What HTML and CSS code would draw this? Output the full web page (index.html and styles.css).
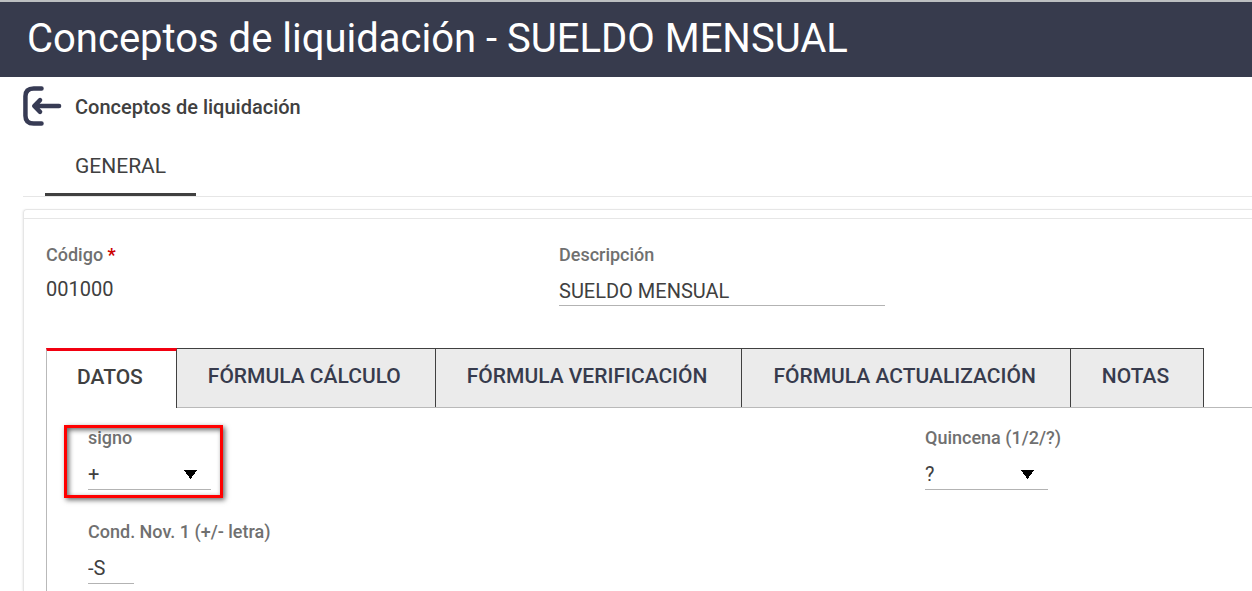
FILE: index.html
```html
<!DOCTYPE html>
<html lang="es">
<head>
<meta charset="utf-8">
<meta name="viewport" content="width=device-width, initial-scale=1">
<title>Conceptos de liquidación - SUELDO MENSUAL</title>
<link rel="stylesheet" href="styles.css">
</head>
<body>
<header class="title-bar">
  <h1 class="title">Conceptos de liquidación - SUELDO MENSUAL</h1>
</header>
<main class="page">
  <a class="back" href="#conceptos">
    <svg class="back-icon" viewBox="0 0 40 42" aria-hidden="true">
      <path d="M19 3H11Q2.500 3 2.500 11V31Q2.500 39 11 39H19M37 21H13M17.500 15L11.500 21L17.500 27" fill="none" stroke="currentColor" stroke-width="4.600" stroke-linecap="round" stroke-linejoin="round"/>
    </svg>
    <span class="back-text">Conceptos de liquidación</span>
  </a>
  <nav class="sections">
    <button class="section-tab" type="button">GENERAL</button>
  </nav>
  <section class="card">
    <div class="summary">
      <div class="field">
        <span class="label">Código <span class="required">*</span></span>
        <output class="value">001000</output>
      </div>
      <div class="field">
        <label class="label" for="descripcion">Descripción</label>
        <input class="control wide" id="descripcion" type="text" value="SUELDO MENSUAL">
      </div>
    </div>
    <div class="tabs" role="tablist">
      <button class="tab active" type="button" role="tab" aria-selected="true">DATOS</button>
      <button class="tab" type="button" role="tab">FÓRMULA CÁLCULO</button>
      <button class="tab" type="button" role="tab">FÓRMULA VERIFICACIÓN</button>
      <button class="tab" type="button" role="tab">FÓRMULA ACTUALIZACIÓN</button>
      <button class="tab" type="button" role="tab">NOTAS</button>
    </div>
    <div class="panel" role="tabpanel">
      <div class="field marked">
        <label class="label" for="signo">signo</label>
        <select class="control choice" id="signo"><option>+</option><option>-</option></select>
      </div>
      <div class="field">
        <label class="label" for="quincena">Quincena (1/2/?)</label>
        <select class="control choice" id="quincena"><option>?</option><option>1</option><option>2</option></select>
      </div>
      <div class="field">
        <label class="label" for="condicion">Cond. Nov. 1 (+/- letra)</label>
        <input class="control short" id="condicion" type="text" value="-S">
      </div>
    </div>
  </section>
</main>
</body>
</html>
```

FILE: styles.css
```css
* {
  box-sizing: border-box;
}

body {
  margin: 0;
  min-height: 100vh;
  display: flex;
  flex-direction: column;
  background: #fff;
  color: #404040;
  font-family: Roboto, "Liberation Sans", sans-serif;
}

button,
input,
select {
  margin: 0;
  border: 0;
  border-radius: 0;
  padding: 0;
  background: none;
  color: inherit;
  font-family: inherit;
}

.title-bar {
  border-top: 2px solid #bcbfc1;
  padding: 13px 27px 14px;
  background: #373b4d;
}

.title {
  margin: 0;
  color: #fff;
  font-size: 40px;
  font-weight: 400;
  line-height: 48px;
}

.page {
  flex: 1;
  display: flex;
  flex-direction: column;
  padding: 8px 0 0 23px;
}

.back {
  display: flex;
  align-items: center;
  gap: 13px;
  align-self: flex-start;
  color: #404040;
  font-size: 20px;
  font-weight: 500;
  line-height: 24px;
  text-decoration: none;
}

.back-text {
  padding-top: 2px;
}

.back-icon {
  width: 39px;
  height: 42px;
  color: #373b54;
}

.sections {
  display: flex;
  margin-top: 9px;
  padding-left: 22px;
  border-bottom: 1px solid #e6e6e6;
}

.section-tab {
  height: 60px;
  padding: 2px 30px 0;
  border-bottom: 3px solid #404040;
  font-size: 21px;
  font-weight: 400;
  line-height: 24px;
}

.card {
  flex: 1;
  display: flex;
  flex-direction: column;
  margin-top: 12px;
  padding: 8px 0 0;
  border: 1px solid #e6e6e6;
  border-width: 1px 0 0 1px;
  border-top-left-radius: 4px;
  box-shadow: -1px 0 2px rgba(0, 0, 0, 0.06);
}

.summary {
  display: grid;
  grid-template-columns: 513fr 693fr;
  padding: 24px 0 42px 22px;
  border-top: 1px solid #e6e6e6;
}

.field {
  display: flex;
  flex-direction: column;
  align-items: flex-start;
  position: relative;
}

.label {
  color: #707070;
  font-size: 18px;
  font-weight: 500;
  line-height: 24px;
}

.required {
  color: #c00;
  font-weight: 700;
}

.value {
  margin-top: 10px;
  font-size: 20px;
  line-height: 24px;
}

.control {
  height: 32px;
  margin-top: 8px;
  border-bottom: 1px solid #b3b3b3;
  font-size: 20px;
  line-height: 24px;
}

.wide {
  width: 326px;
  height: 31px;
  padding-top: 2px;
}

.short {
  width: 46px;
}

.choice {
  width: 123px;
  appearance: none;
  background: conic-gradient(from -37deg at 50% 100%, #000 74deg, transparent 0) right 14px bottom 10px / 13px 9px no-repeat;
}

.tabs {
  display: flex;
  margin-left: 22px;
  border-bottom: 1px solid #b9b9b9;
}

.tab {
  height: 59px;
  padding: 0 34px 5px 31px;
  border: 1px solid #404040;
  border-width: 1px 1px 0 0;
  background: #ebebeb;
  color: #373b4d;
  font-size: 21px;
  font-weight: 500;
  line-height: 24px;
}

.active {
  height: 60px;
  margin-bottom: -1px;
  padding-left: 30px;
  padding-right: 33px;
  border-top: 3px solid #f20010;
  border-left: 1px solid #b9b9b9;
  background: #fff;
  color: #404040;
}

.panel {
  flex: 1;
  display: grid;
  grid-template-columns: 837fr 327fr;
  align-content: start;
  row-gap: 30px;
  margin-left: 22px;
  padding: 18px 0 7px 41px;
  border-left: 1px solid #b9b9b9;
}

.marked::after {
  content: "";
  position: absolute;
  top: -1px;
  left: -24px;
  width: 153px;
  height: 67px;
  border: 3px solid #f00;
  box-shadow: 2px 2px 5px rgba(0, 0, 0, 0.6), inset 2px 2px 5px rgba(0, 0, 0, 0.6);
  pointer-events: none;
}
```
